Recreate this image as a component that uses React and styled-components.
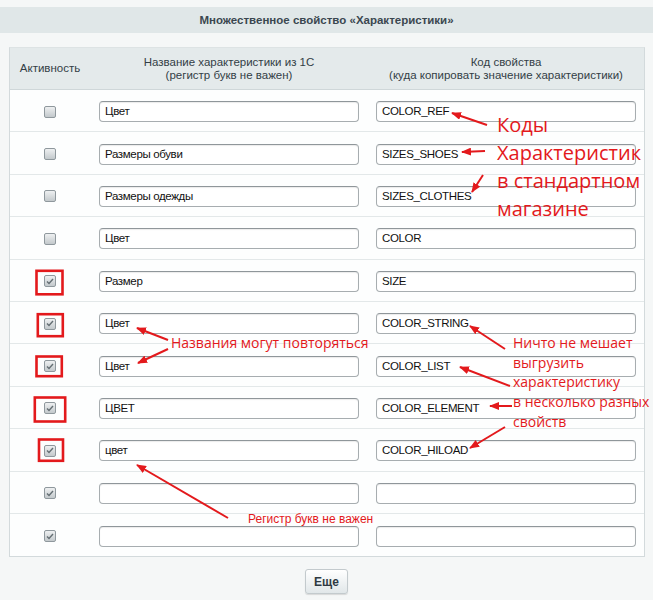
import React from "react";
import styled, { createGlobalStyle } from "styled-components";

const GlobalStyle = createGlobalStyle`
  body {
    margin: 0;
    background-color: #f5f7f7;
    font-family: "Liberation Sans", Arial, sans-serif;
  }
`;

const Page = styled.div`
  position: relative;
  width: 653px;
  height: 600px;
  padding-top: 7px;
  box-sizing: border-box;
`;

const TitleBar = styled.div`
  height: 26px;
  background-color: #e0e7e8;
  color: #3b4750;
  font-size: 11.5px;
  font-weight: bold;
  display: flex;
  align-items: center;
  justify-content: center;
`;

const Table = styled.div`
  margin: 14px 8px 0 9px;
  border: 1px solid #d3dadc;
  border-top-color: #dde3e4;
  background-color: #fdfefe;
`;

const Row = styled.div`
  display: grid;
  grid-template-columns: 72px 260px 260px;
  column-gap: 17px;
  align-items: center;
  box-sizing: border-box;
  height: ${(p) => (p.$head ? "42px" : "42.4px")};
  padding-top: ${(p) => (p.$head ? "0" : "2px")};
  background-color: ${(p) => (p.$head ? "#e4eaeb" : "transparent")};
  border-bottom: 1px solid ${(p) => (p.$head ? "#cfd7d9" : "#e3e8e9")};

  &:last-child {
    border-bottom: none;
  }
`;

const HeadCell = styled.div`
  color: #333e46;
  font-size: 11.5px;
  line-height: 13px;
  text-align: center;
  padding-left: ${(p) => (p.$first ? "8px" : "0")};
`;

const CheckCell = styled.div`
  display: flex;
  justify-content: center;
  padding-left: 8px;
`;

const Checkbox = styled.span`
  width: 12px;
  height: 12px;
  box-sizing: border-box;
  border: 1px solid #8f989d;
  border-radius: 2px;
  background: linear-gradient(#eef0f1, #c3c9cc);
  display: flex;
  align-items: center;
  justify-content: center;
`;

const Field = styled.div`
  height: 21px;
  box-sizing: border-box;
  border: 1px solid #a7adb0;
  border-top-color: #8f969a;
  border-radius: 4px;
  background-color: #fff;
  box-shadow: inset 0 1px 1px rgba(0, 0, 0, 0.08);
  padding: 0 5px;
  font-size: 11.5px;
  line-height: 19px;
  color: #111;
  letter-spacing: -0.35px;
`;

const Footer = styled.div`
  display: flex;
  justify-content: center;
  padding-top: 12px;
`;

const Button = styled.div`
  width: 43px;
  height: 25px;
  box-sizing: border-box;
  border: 1px solid #c3cacd;
  border-radius: 3px;
  background: linear-gradient(#ffffff, #e1e7e9);
  box-shadow: 0 1px 1px rgba(0, 0, 0, 0.12);
  color: #2f3a42;
  font-size: 12px;
  font-weight: bold;
  display: flex;
  align-items: center;
  justify-content: center;
`;

const Overlay = styled.svg`
  position: absolute;
  left: 0;
  top: 0;
  pointer-events: none;
`;

const Note = styled.div`
  position: absolute;
  left: ${(p) => p.$x}px;
  top: ${(p) => p.$y}px;
  color: #e3191c;
  font-family: ${(p) => (p.$plain ? '"Liberation Sans", Arial' : '"Open Sans"')}, sans-serif;
  font-size: ${(p) => p.$size}px;
  line-height: ${(p) => p.$lh}px;
  white-space: nowrap;
`;

const rows = [
  { on: false, name: "Цвет", code: "COLOR_REF" },
  { on: false, name: "Размеры обуви", code: "SIZES_SHOES" },
  { on: false, name: "Размеры одежды", code: "SIZES_CLOTHES" },
  { on: false, name: "Цвет", code: "COLOR" },
  { on: true, name: "Размер", code: "SIZE" },
  { on: true, name: "Цвет", code: "COLOR_STRING" },
  { on: true, name: "Цвет", code: "COLOR_LIST" },
  { on: true, name: "ЦВЕТ", code: "COLOR_ELEMENT" },
  { on: true, name: "цвет", code: "COLOR_HILOAD" },
  { on: true, name: "", code: "" },
  { on: true, name: "", code: "" },
];

// hand-drawn marks: boxes round the checkboxes and the arrows
const boxes = [
  [36.5, 270.8, 26, 23.5],
  [37.8, 314.2, 25, 22],
  [36.5, 356.5, 25.3, 19.7],
  [34.8, 397.5, 30.4, 24],
  [39, 439.5, 24, 21.3],
];

const arrows = [
  [487, 125, 452, 113],
  [485, 151, 462, 152],
  [483, 175, 472, 192],
  [168, 340, 137, 328],
  [168, 349, 138, 363],
  [505, 349, 470, 326],
  [510, 386, 460, 367],
  [512, 406, 490, 406],
  [505, 427, 470, 448],
  [228, 518, 137, 465],
];

const Tick = () => (
  <svg width="8" height="7" viewBox="0 0 8 7">
    <polyline points="1,3.5 3,5.5 7,1" fill="none" stroke="#646e73" strokeWidth="1.4" />
  </svg>
);

const App = () => (
  <Page>
    <GlobalStyle />
    <TitleBar>Множественное свойство «Характеристики»</TitleBar>
    <Table>
      <Row $head>
        <HeadCell $first>Активность</HeadCell>
        <HeadCell>
          Название характеристики из 1С
          <br />
          (регистр букв не важен)
        </HeadCell>
        <HeadCell>
          Код свойства
          <br />
          (куда копировать значение характеристики)
        </HeadCell>
      </Row>
      {rows.map((r, i) => (
        <Row key={i}>
          <CheckCell>
            <Checkbox>{r.on && <Tick />}</Checkbox>
          </CheckCell>
          <Field>{r.name}</Field>
          <Field>{r.code}</Field>
        </Row>
      ))}
    </Table>
    <Footer>
      <Button>Еще</Button>
    </Footer>

    <Overlay width="653" height="600">
      <defs>
        <marker id="head" markerUnits="userSpaceOnUse" markerWidth="10" markerHeight="8" refX="9" refY="4" orient="auto">
          <path d="M0,0 L10,4 L0,8 Z" fill="#e3191c" />
        </marker>
      </defs>
      {boxes.map(([x, y, w, h], i) => (
        <rect key={i} x={x} y={y} width={w} height={h} fill="none" stroke="#e3191c" strokeWidth="2.6" />
      ))}
      {arrows.map(([x1, y1, x2, y2], i) => (
        <line key={i} x1={x1} y1={y1} x2={x2} y2={y2} stroke="#e3191c" strokeWidth="2" markerEnd="url(#head)" />
      ))}
    </Overlay>

    <Note $x={497} $y={111} $size={20} $lh={28}>
      Коды
      <br />
      Характеристик
      <br />
      в стандартном
      <br />
      магазине
    </Note>
    <Note $x={171} $y={333} $size={14} $lh={20}>
      Названия могут повторяться
    </Note>
    <Note $x={513} $y={333} $size={14} $lh={19.7}>
      Ничто не мешает
      <br />
      выгрузить
      <br />
      характеристику
      <br />
      в несколько разных
      <br />
      свойств
    </Note>
    <Note $plain $x={248} $y={512} $size={12} $lh={14}>
      Регистр букв не важен
    </Note>
  </Page>
);

export default App;
